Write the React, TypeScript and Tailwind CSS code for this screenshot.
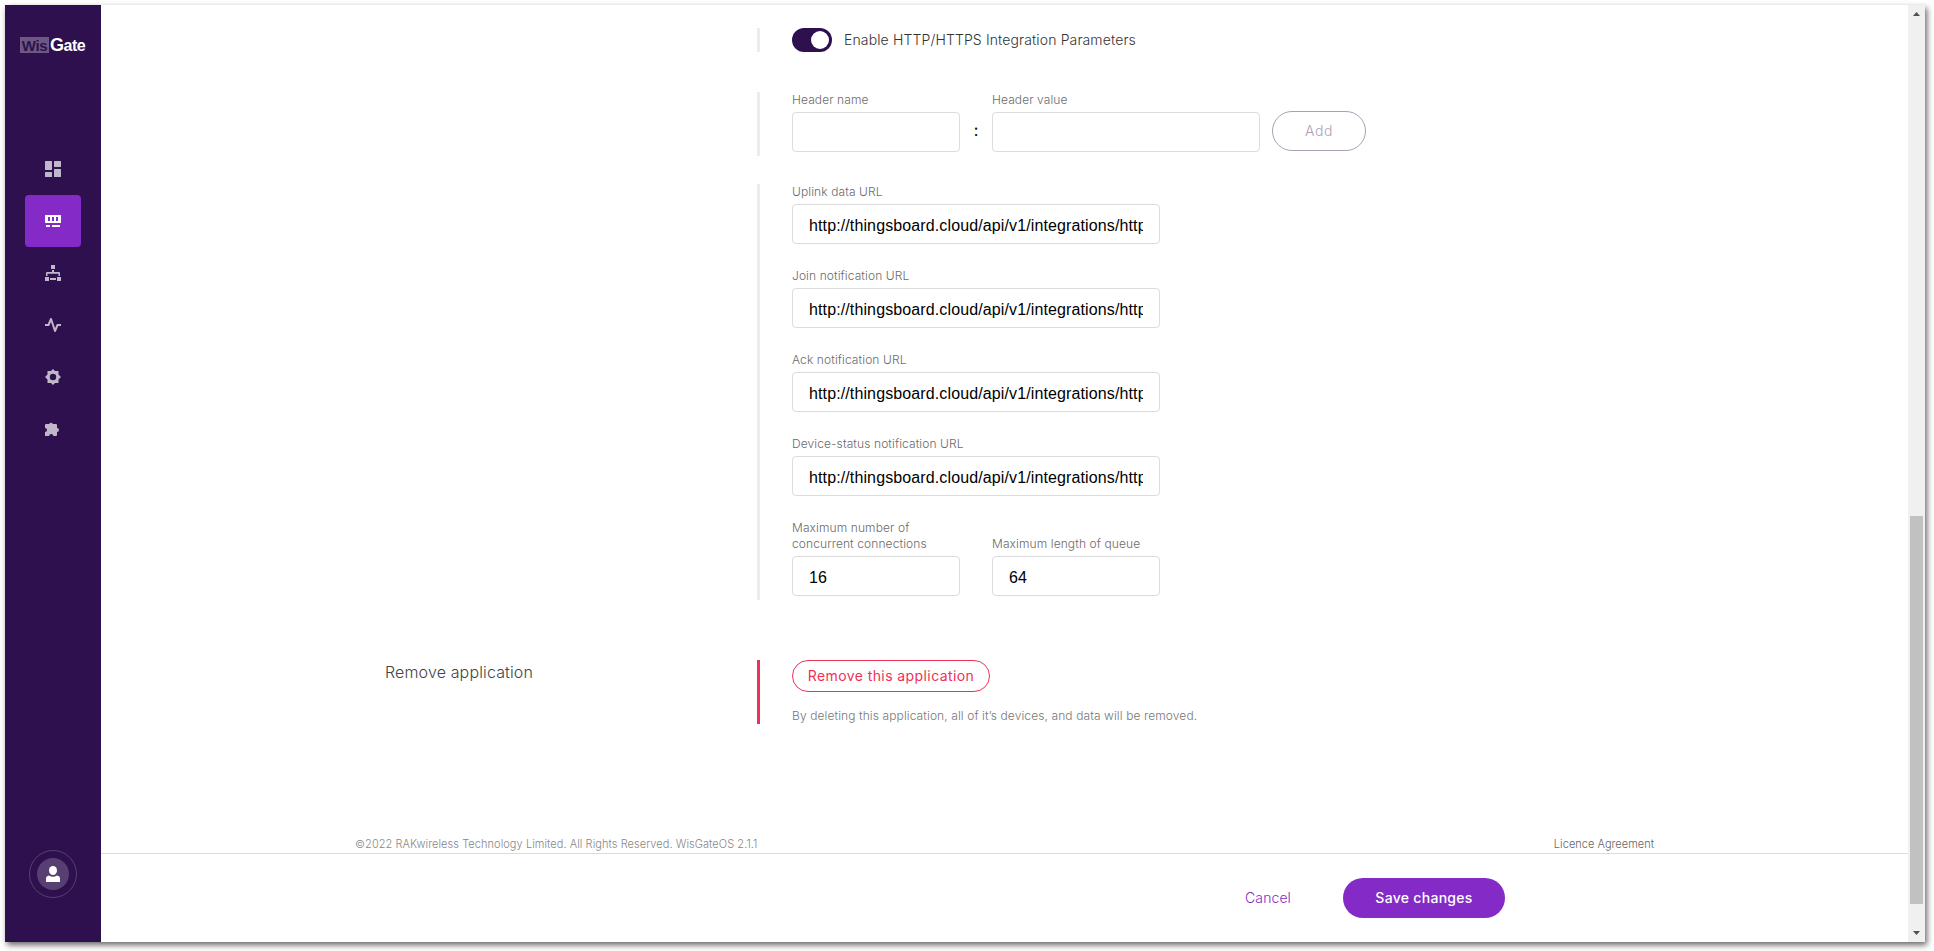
import type { ReactNode } from "react";

const URL_VALUE = "http://thingsboard.cloud/api/v1/integrations/http";

function Field({ label, width, value }: { label: string; width: string; value?: string }) {
  return (
    <label className={`flex flex-col justify-end ${width}`}>
      <span className="text-xs/4 font-light tracking-[0.1px] whitespace-pre-line text-[#6b6b6b]">{label}</span>
      <span className="mt-1 flex h-10 items-center rounded border border-[#dcdcdc] px-4">
        <span className="w-full overflow-hidden pt-1 font-['Liberation_Sans',Arial,sans-serif] text-base tracking-[0.12px] whitespace-nowrap text-black">
          {value}
        </span>
      </span>
    </label>
  );
}

function Section({ className, children }: { className: string; children: ReactNode }) {
  return <section className={`ml-[402px] border-l-[3px] pl-8 ${className}`}>{children}</section>;
}

const navIcons: ReactNode[] = [
  <g key="dashboard">
    <rect width="7" height="9" rx=".5" />
    <rect y="11" width="7" height="5" rx=".5" />
    <rect x="9" width="7" height="6" rx=".5" />
    <rect x="9" y="8" width="7" height="8" rx=".5" />
  </g>,
  <g key="network-server">
    <path fillRule="evenodd" d="M.5 2h15a.5.5 0 0 1 .5.5V10H0V2.500A.5.5 0 0 1 .5 2ZM3 4v4h2V4Zm4 0v4h2V4Zm4 0v4h2V4Z" />
    <path d="M1 12h4v2H1zM7 12h8v2H7z" />
  </g>,
  <g key="lan">
    <path d="M6 0h4v4H6zM7 5h2v2h5a1 1 0 0 1 1 1v3h-1.500V8.700h-11V11H1V8a1 1 0 0 1 1-1h5z" />
    <path d="M0 12h4v4H0zM12 12h4v4h-4zM5 13h6v2H5z" />
  </g>,
  <path key="diagnostics" fill="none" stroke="currentColor" strokeWidth="2" strokeLinejoin="round" d="M0 8h3.500L6 2l4 12 2.500-6H16" />,
  <path
    key="settings"
    fillRule="evenodd"
    d="M8 0l2 2h3.500v3.500L16 8l-2.500 2.500V14H10l-2 2-2-2H2.500v-3.500L0 8l2.500-2.500V2H6ZM8 4.800a3.200 3.200 0 1 0 0 6.400 3.200 3.200 0 0 0 0-6.400Z"
  />,
  <path
    key="extensions"
    d="M1 3h3.200a1.900 1.900 0 0 1 3.600 0H11a1 1 0 0 1 1 1v3a2 2 0 0 1 0 4v3a1 1 0 0 1-1 1H8.300a2.100 2.100 0 0 0-4.200 0H0v-4a2 2 0 0 0 0-4V4a1 1 0 0 1 1-1Z"
  />,
];

function Sidebar() {
  return (
    <aside className="flex w-24 shrink-0 flex-col items-center bg-[#2e104e]">
      <div className="mt-8 flex h-4 w-[66px] items-center font-['Liberation_Sans',Arial,sans-serif] text-[15px] leading-4 font-bold">
        <span className="flex h-4 w-[29px] shrink-0 items-center justify-center bg-[#6d5883] pt-px tracking-[-0.3px] text-[#2e104e]">
          Wis
        </span>
        <span className="ml-[1px] pt-px text-base/4 tracking-[-0.500px] text-white">
          <span className="text-[18px]/4">G</span>ate
        </span>
      </div>
      <nav className="mt-[90px] flex flex-col">
        {navIcons.map((icon, i) => (
          <a
            key={i}
            className={`flex h-[52px] w-14 items-center justify-center rounded ${i === 1 ? "bg-[#842bc7] text-white" : "text-[#c0b7ca]"}`}
          >
            <svg width="16" height="16" viewBox="0 0 16 16" fill="currentColor">
              {icon}
            </svg>
          </a>
        ))}
      </nav>
      <div className="mt-auto mb-11 flex size-12 items-center justify-center rounded-full border border-[#583f71]">
        <div className="flex size-8 items-center justify-center rounded-full bg-[#583f71] text-white">
          <svg width="16" height="16" viewBox="0 0 16 16" fill="currentColor">
            <ellipse cx="8" cy="4.500" rx="4" ry="4.500" />
            <path d="M1 16v-3.500Q1 10 4 9.500 8 12 12 9.500q3 .5 3 3V16z" />
          </svg>
        </div>
      </div>
    </aside>
  );
}

function Scrollbar() {
  return (
    <div className="flex w-[17px] shrink-0 flex-col items-center bg-[#f0f0f0] text-[#505050]">
      <svg className="mt-[7px]" width="7" height="4" viewBox="0 0 7 4" fill="currentColor">
        <path d="M3.500 0 7 4H0z" />
      </svg>
      <div className="mt-[500px] h-[388px] w-[13px] bg-[#c1c1c1]" />
      <svg className="mt-auto mb-[7px]" width="7" height="4" viewBox="0 0 7 4" fill="currentColor">
        <path d="M3.500 4 7 0H0z" />
      </svg>
    </div>
  );
}

export default function App() {
  return (
    <div className="h-[951px] w-[1934px] overflow-hidden bg-white p-[5px] font-['Inter',sans-serif]">
      <div className="flex h-[937px] w-[1920px] bg-white shadow-[2px_3px_6px_0px_rgba(0,0,0,0.6)]">
        <Sidebar />
        <main className="flex w-[1807px] flex-col">
          <div className="ml-[254px] flex h-[848px] w-[1300px] flex-col">
            <Section className="mt-[23px] flex h-6 items-center border-[#ececec]">
              <div className="flex h-6 w-10 items-center justify-end rounded-full bg-[#2e104e] pr-[3px]">
                <div className="size-[18px] rounded-full bg-white" />
              </div>
              <span className="ml-3 text-sm font-light tracking-[0.13px] text-[#333]">Enable HTTP/HTTPS Integration Parameters</span>
            </Section>

            <Section className="mt-10 flex h-16 border-[#ececec]">
              <div className="flex h-[60px] items-end">
                <Field label="Header name" width="w-[168px]" />
                <span className="flex h-10 w-8 items-center justify-center pb-1 text-base text-black">:</span>
                <Field label="Header value" width="w-[268px]" />
                <button className="mb-px ml-3 h-10 w-[94px] rounded-full border border-[#ab9fb8] text-sm font-light tracking-[0.600px] text-[#ab9fb8]">
                  Add
                </button>
              </div>
            </Section>

            <Section className="mt-7 flex h-[416px] flex-col gap-6 border-[#ececec]">
              <Field label="Uplink data URL" width="w-[368px]" value={URL_VALUE} />
              <Field label="Join notification URL" width="w-[368px]" value={URL_VALUE} />
              <Field label="Ack notification URL" width="w-[368px]" value={URL_VALUE} />
              <Field label="Device-status notification URL" width="w-[368px]" value={URL_VALUE} />
              <div className="flex gap-8">
                <Field label={"Maximum number of\nconcurrent connections"} width="w-[168px]" value="16" />
                <Field label="Maximum length of queue" width="w-[168px]" value="64" />
              </div>
            </Section>

            <div className="mt-[60px] flex h-16 pl-[30px]">
              <h2 className="w-[372px] text-base font-light tracking-[0.14px] text-[#444]">Remove application</h2>
              <div className="flex flex-col items-start border-l-[3px] border-[#ee3158] pl-8">
                <button className="h-8 w-[198px] rounded-full border border-[#ee3158] text-sm tracking-[0.41px] text-[#ee3158]">
                  Remove this application
                </button>
                <p className="mt-4 text-xs/4 font-light tracking-[0.1px] text-[#777]">
                  By deleting this application, all of it’s devices, and data will be removed.
                </p>
              </div>
            </div>

            <footer className="mt-auto mb-px flex justify-between text-[11px]/4 font-light">
              <span className="tracking-[0.06px] text-[#888]">
                ©2022 RAKwireless Technology Limited. All Rights Reserved. WisGateOS 2.1.1
              </span>
              <a className="pr-px tracking-[0.03px] text-[#666]">Licence Agreement</a>
            </footer>
          </div>
          <div className="flex h-[89px] items-start justify-end gap-[52px] border-t border-[#dcdcdc] pt-6 pr-[403px]">
            <button className="h-10 text-sm font-light tracking-[0.1px] text-[#842bc7]">Cancel</button>
            <button className="h-10 w-[162px] rounded-full bg-[#842bc7] text-sm font-medium tracking-[0.3px] text-white">
              Save changes
            </button>
          </div>
        </main>
        <Scrollbar />
      </div>
    </div>
  );
}
